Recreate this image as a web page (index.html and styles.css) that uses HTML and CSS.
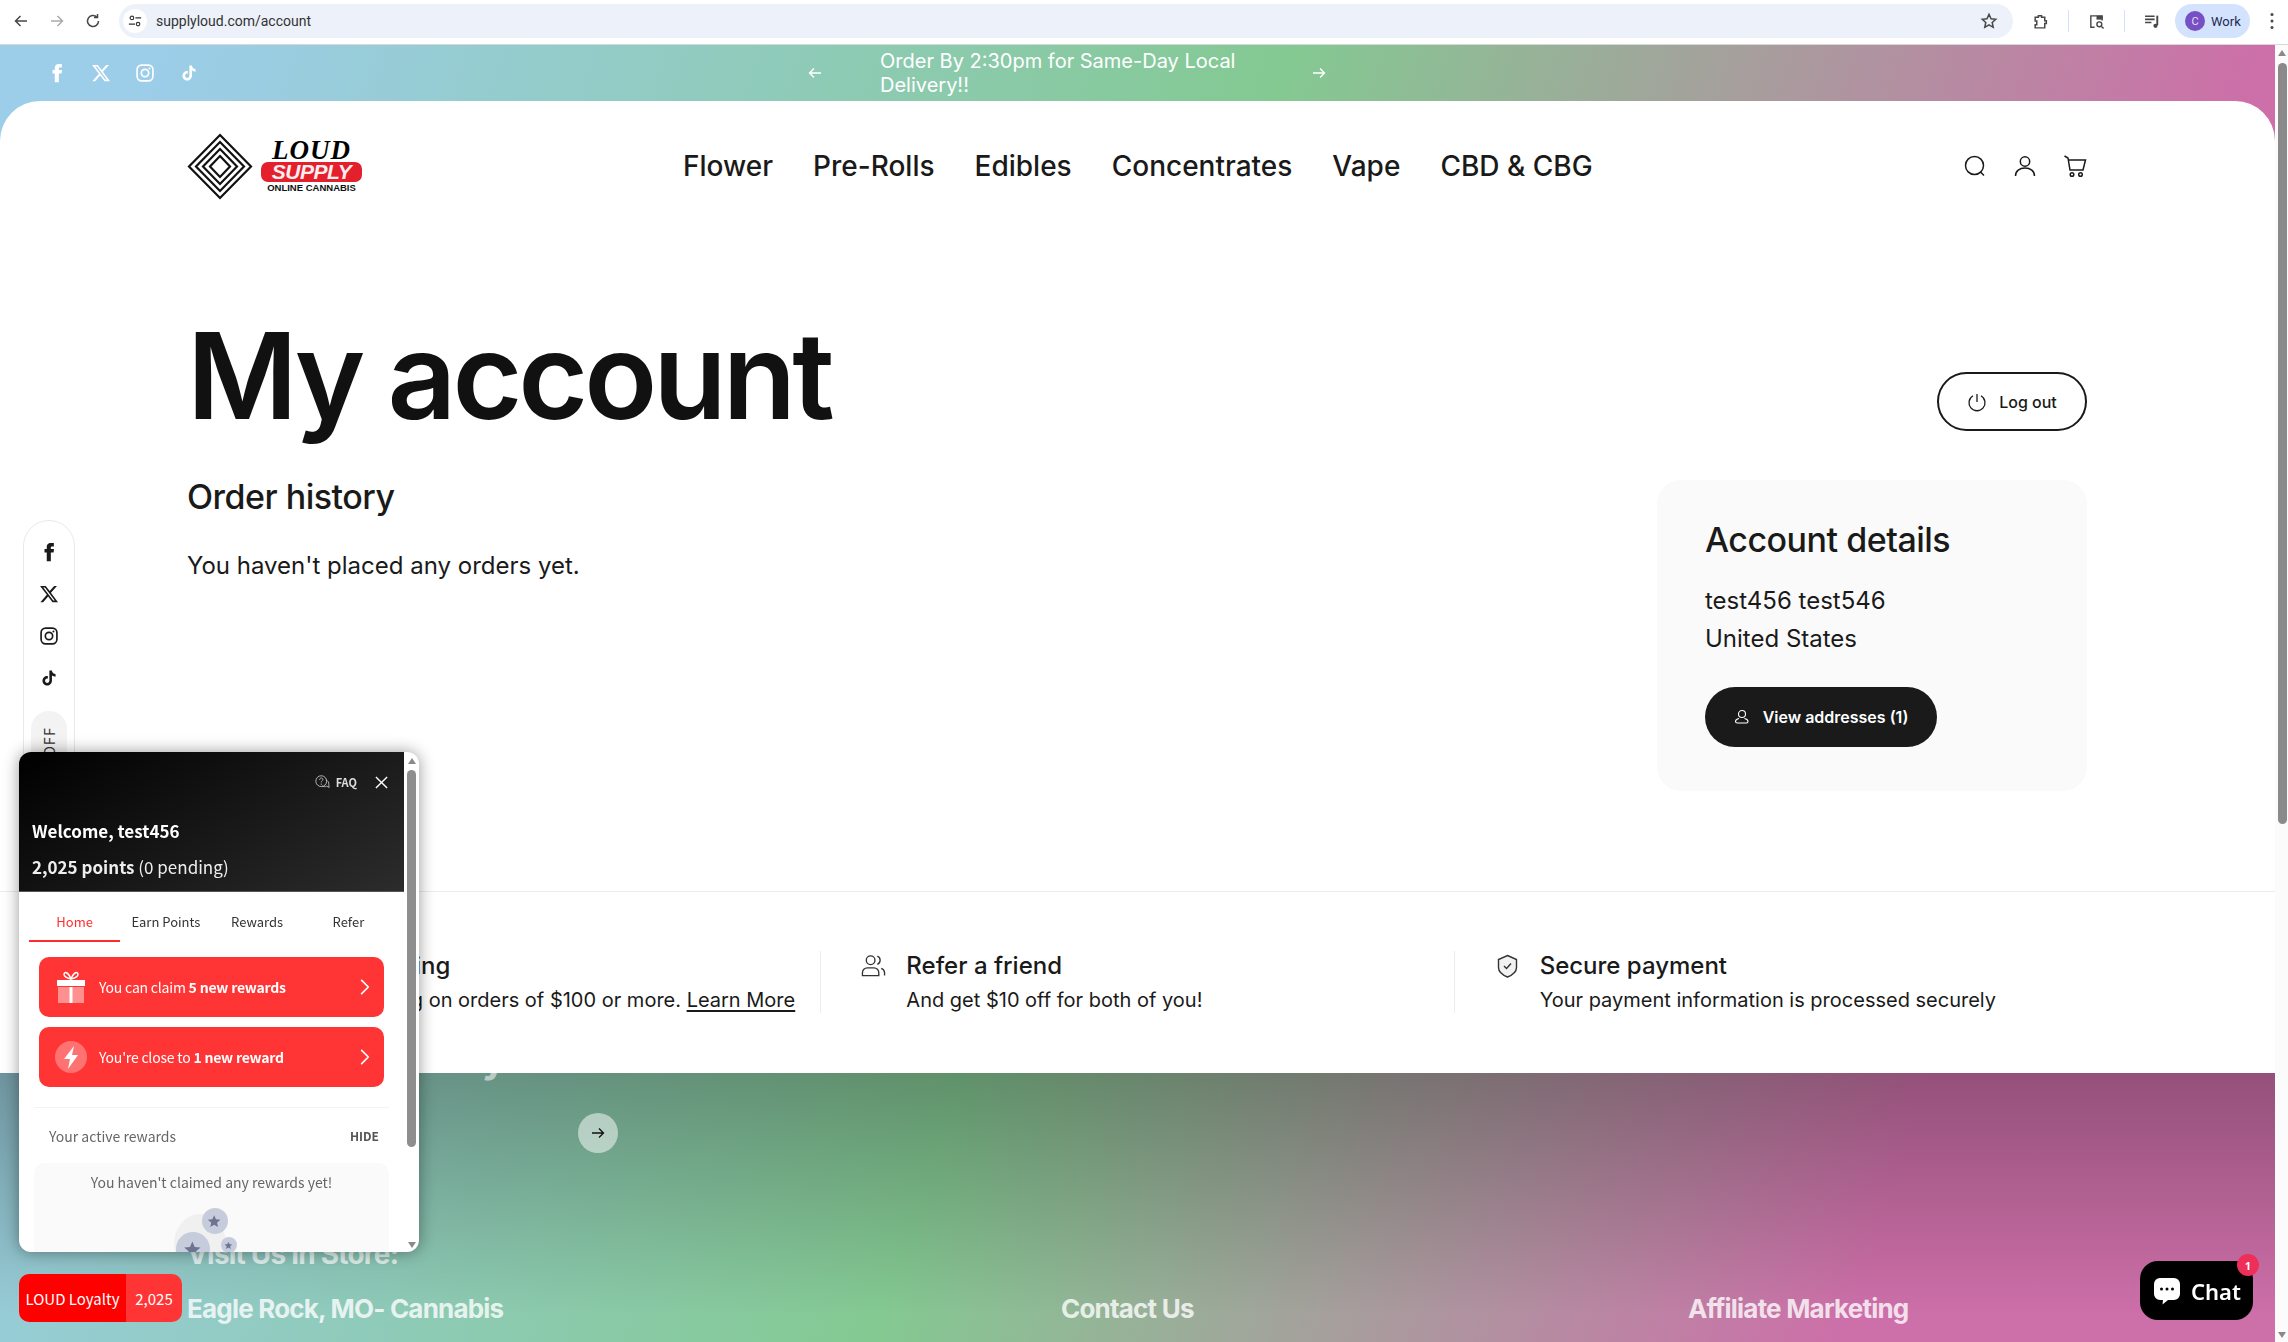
FILE: index.html
```html
<!DOCTYPE html>
<html lang="en">
<head>
    <meta charset="UTF-8">
    <meta name="viewport" content="width=device-width, initial-scale=1.0">
    <title>My account - Loud Supply</title>
    <link rel="stylesheet" href="styles.css">
</head>
<body>
    <svg class="icon-defs" aria-hidden="true">
        <symbol id="i-facebook" viewBox="0 0 24 24"><path fill="currentColor" d="M14.2 8.3V6.4c0-.9.6-1.1 1-1.1h2.6V1.2h-3.6c-4 0-4.9 3-4.9 4.9v2.2H6.6v4.2h2.7V23h4.9V12.5h3.3l.5-4.2z"/></symbol>
        <symbol id="i-x" viewBox="0 0 24 24"><path fill="currentColor" d="M18.244 2.25h3.308l-7.227 8.26 8.502 11.24H16.17l-5.214-6.817L4.99 21.75H1.68l7.73-8.835L1.254 2.25H8.08l4.713 6.231zm-1.161 17.52h1.833L7.084 4.126H5.117z"/></symbol>
        <symbol id="i-instagram" viewBox="0 0 24 24"><rect x="2.5" y="2.5" width="19" height="19" rx="5.5" fill="none" stroke="currentColor" stroke-width="2"/><circle cx="12" cy="12" r="4.4" fill="none" stroke="currentColor" stroke-width="2"/><circle cx="17.4" cy="6.6" r="1.2" fill="currentColor"/></symbol>
        <symbol id="i-tiktok" viewBox="0 0 24 24"><path fill="currentColor" d="M16.6 5.82A4.28 4.28 0 0 1 15.54 3h-3.09v12.4a2.59 2.59 0 0 1-2.59 2.5c-1.42 0-2.6-1.16-2.6-2.6 0-1.72 1.66-3.01 3.37-2.48V9.66c-3.45-.46-6.47 2.22-6.47 5.64 0 3.33 2.76 5.7 5.69 5.7 3.14 0 5.69-2.55 5.69-5.7V9.01a7.35 7.35 0 0 0 4.3 1.38V7.3s-1.88.09-3.24-1.48z"/></symbol>
        <symbol id="i-chevron" viewBox="0 0 12 20"><path d="M2 2l8 8-8 8" fill="none" stroke="currentColor" stroke-width="2" stroke-linecap="round" stroke-linejoin="round"/></symbol>
        <symbol id="i-star" viewBox="0 0 24 24"><path fill="currentColor" d="M12 2l3 7 7.5.6-5.7 4.9 1.8 7.4L12 18l-6.6 3.9 1.8-7.4L1.500 9.600 9 9z"/></symbol>
    </svg>

    <div class="browser-bar">
        <div class="browser-nav">
            <svg viewBox="0 0 16 16"><path d="M14 8H2.500M7.500 3L2.500 8l5 5" fill="none" stroke="#474747" stroke-width="1.500"/></svg>
            <svg viewBox="0 0 16 16"><path d="M2 8h11.500M8.500 3l5 5-5 5" fill="none" stroke="#aaa" stroke-width="1.500"/></svg>
            <svg viewBox="0 0 16 16"><path d="M13.500 8A5.500 5.500 0 1 1 11.800 4M12.500 1v3.600H9" fill="none" stroke="#474747" stroke-width="1.500"/></svg>
        </div>
        <div class="address-bar">
            <span class="site-info">
                <svg viewBox="0 0 16 16"><g fill="none" stroke="#333" stroke-width="1.300"><circle cx="4.500" cy="4.500" r="2"/><path d="M8.500 4.500H15M1 11.500h7"/><circle cx="11.500" cy="11.500" r="2"/></g></svg>
            </span>
            <span class="address-text">supplyloud.com/account</span>
            <svg class="address-star" viewBox="0 0 24 24"><path d="M12 3l2.700 6 6.300.7-4.700 4.300 1.300 6.500L12 17.200l-5.600 3.300 1.300-6.500L3 9.700 9.300 9z" fill="none" stroke="#474747" stroke-width="2"/></svg>
        </div>
        <div class="browser-tools">
            <svg viewBox="0 0 16 16"><path d="M3 4h3V2.500h3V4h3v3.200h1.500v2.600H12V14H3v-3h1.500V7.500H3z" fill="none" stroke="#474747" stroke-width="1.400"/></svg>
            <span class="tool-sep"></span>
            <svg viewBox="0 0 18 18"><path d="M7 15H3V3h12v5" fill="none" stroke="#474747" stroke-width="1.500"/><path d="M9 3h6v4H9z" fill="#474747"/><circle cx="12" cy="12" r="2.600" fill="none" stroke="#474747" stroke-width="1.500"/><path d="M14 14l2.500 2.500" stroke="#474747" stroke-width="1.500"/></svg>
            <span class="tool-sep"></span>
            <svg viewBox="0 0 16 16"><path d="M1 3h9M1 6h9M1 9h6" stroke="#474747" stroke-width="1.500"/><path d="M12.500 2.500v9" stroke="#474747" stroke-width="1.800"/><circle cx="10.800" cy="12" r="2" fill="#474747"/></svg>
            <div class="profile-pill"><span class="profile-avatar">C</span>Work</div>
            <svg class="kebab" viewBox="0 0 4 18"><circle cx="2" cy="2.500" r="1.500" fill="#474747"/><circle cx="2" cy="9" r="1.500" fill="#474747"/><circle cx="2" cy="15.500" r="1.500" fill="#474747"/></svg>
        </div>
    </div>

    <div class="viewport">
        <div class="page">
            <div class="announcement">
                <div class="announcement-social">
                    <svg><use href="#i-facebook"/></svg>
                    <svg><use href="#i-x"/></svg>
                    <svg><use href="#i-instagram"/></svg>
                    <svg><use href="#i-tiktok"/></svg>
                </div>
                <div class="announcement-slider">
                    <svg viewBox="0 0 16 16"><path d="M14 8H2.500M7 3.500L2.500 8 7 12.500" fill="none" stroke="#fff" stroke-width="1.300"/></svg>
                    <p>Order By 2:30pm for Same-Day Local Delivery!!</p>
                    <svg viewBox="0 0 16 16"><path d="M2 8h11.500M9 3.500L13.500 8 9 12.500" fill="none" stroke="#fff" stroke-width="1.300"/></svg>
                </div>
            </div>

            <main class="main-panel">
                <header class="site-header">
                    <a class="logo" href="#">
                        <svg class="logo-mark" viewBox="0 0 66 67">
                            <g fill="none" stroke="#111" stroke-width="2.200">
                                <polygon points="33,2 64,33.500 33,65 2,33.500"/>
                                <polygon points="33,9 57,33.500 33,58 9,33.500"/>
                                <polygon points="33,16 50,33.500 33,51 16,33.500"/>
                                <polygon points="33,23 43,33.500 33,44 23,33.500"/>
                            </g>
                        </svg>
                        <span class="logo-words">
                            <span class="logo-loud">LOUD</span>
                            <span class="logo-supply">SUPPLY</span>
                            <span class="logo-online">ONLINE CANNABIS</span>
                        </span>
                    </a>
                    <nav class="main-nav">
                        <a href="#">Flower</a>
                        <a href="#">Pre-Rolls</a>
                        <a href="#">Edibles</a>
                        <a href="#">Concentrates</a>
                        <a href="#">Vape</a>
                        <a href="#">CBD &amp; CBG</a>
                    </nav>
                    <div class="header-icons">
                        <svg viewBox="0 0 24 24"><circle cx="11.500" cy="11.500" r="9" fill="none" stroke="#1a1a1a" stroke-width="1.500"/><path d="M17.500 18l3.500 3.500" stroke="#1a1a1a" stroke-width="1.500"/></svg>
                        <svg viewBox="0 0 24 24"><circle cx="12" cy="7.500" r="4.700" fill="none" stroke="#1a1a1a" stroke-width="1.500"/><path d="M2.500 22c0-5 4-8 9.500-8s9.500 3 9.500 8" fill="none" stroke="#1a1a1a" stroke-width="1.500"/></svg>
                        <svg viewBox="0 0 24 24"><path d="M1.500 2L5 4l2 12h13l2.500-10H5.500" fill="none" stroke="#1a1a1a" stroke-width="1.500"/><circle cx="9" cy="20.500" r="1.800" fill="none" stroke="#1a1a1a" stroke-width="1.500"/><circle cx="17.500" cy="20.500" r="1.800" fill="none" stroke="#1a1a1a" stroke-width="1.500"/></svg>
                    </div>
                </header>

                <section class="account">
                    <div class="account-top">
                        <h1>My account</h1>
                        <a class="logout-btn" href="#">
                            <svg viewBox="0 0 20 20"><path d="M10 2v8M6 3.800a8 8 0 1 0 8 0" fill="none" stroke="#1a1a1a" stroke-width="1.300"/></svg>
                            Log out
                        </a>
                    </div>
                    <div class="account-body">
                        <div class="orders">
                            <h2>Order history</h2>
                            <p>You haven't placed any orders yet.</p>
                        </div>
                        <aside class="details-card">
                            <h2>Account details</h2>
                            <p>test456 test546<br>United States</p>
                            <a class="addresses-btn" href="#">
                                <svg viewBox="0 0 16 16"><g fill="none" stroke="#fff" stroke-width="1.100"><circle cx="8" cy="5" r="3.500"/><path d="M5 9.500c-2 .5-3.500 1.500-3.500 3 0 1 1 1.500 2 1.500h9c1 0 1.500-.7 1.500-1.500 0-1.500-1.500-2.500-3.500-3"/></g></svg>
                                View addresses (1)
                            </a>
                        </aside>
                    </div>
                </section>

                <section class="features">
                    <div class="feature feature-first">
                        <div>
                            <h3>Free shipping</h3>
                            <p>Free shipping on orders of $100 or more. <a href="#">Learn More</a></p>
                        </div>
                    </div>
                    <div class="feature">
                        <svg viewBox="0 0 26 24"><g fill="none" stroke="#333" stroke-width="1.400"><circle cx="10" cy="6" r="4.500"/><path d="M17 1.800a4.500 4.500 0 0 1 0 8.400"/><path d="M1.500 22v-3a5 5 0 0 1 5-5h7a5 5 0 0 1 5 5v3z"/><path d="M21 14.500a5 5 0 0 1 3.500 4.500v3"/></g></svg>
                        <div>
                            <h3>Refer a friend</h3>
                            <p>And get $10 off for both of you!</p>
                        </div>
                    </div>
                    <div class="feature">
                        <svg viewBox="0 0 22 24"><path d="M11 1.500l9 4v8c0 4-4 7.500-9 9.500-5-2-9-5.500-9-9.500v-8z" fill="#f2f2f2" stroke="#333" stroke-width="1.400"/><path d="M7.500 12l2.500 2.500 4.500-5" fill="none" stroke="#333" stroke-width="1.400"/></svg>
                        <div>
                            <h3>Secure payment</h3>
                            <p>Your payment information is processed securely</p>
                        </div>
                    </div>
                </section>
            </main>

            <footer class="site-footer">
                <div class="footer-top">
                    <span class="footer-clipped" aria-hidden="true">y</span>
                    <span class="footer-arrow">
                        <svg viewBox="0 0 16 16"><path d="M2 8h11.500M9 3.500L13.500 8 9 12.500" fill="none" stroke="#111" stroke-width="1.300"/></svg>
                    </span>
                </div>
                <div class="footer-cols">
                    <div>
                        <h4 class="visit-title">Visit Us In Store:</h4>
                        <h4>Eagle Rock, MO- Cannabis</h4>
                    </div>
                    <h4>Contact Us</h4>
                    <h4>Affiliate Marketing</h4>
                </div>
            </footer>
        </div>

        <div class="page-scrollbar">
            <span class="arrow-up"></span>
            <span class="page-thumb"></span>
            <span class="arrow-down"></span>
        </div>
    </div>

    <!-- things floating over the page -->
    <div class="side-social">
        <svg class="side-fb"><use href="#i-facebook"/></svg>
        <svg><use href="#i-x"/></svg>
        <svg><use href="#i-instagram"/></svg>
        <svg><use href="#i-tiktok"/></svg>
        <span class="side-off"><span>10% OFF</span></span>
    </div>

    <div class="loyalty-panel">
        <div class="loyalty-content">
            <div class="loyalty-head">
                <div class="loyalty-head-tools">
                    <svg class="faq-icon" viewBox="0 0 18 16"><g fill="none" stroke="#ccc" stroke-width="1"><circle cx="7.500" cy="7" r="6.500"/><path d="M13 5.500c2.500 1 4 3 3.500 5.500l.5 3.500-3-1.500c-2 1-4 .8-5.500-.5"/><path d="M5.500 5.500c0-3 4-3 4-.5 0 1.500-2 1.500-2 3.500"/></g><circle cx="7.500" cy="10.500" r=".8" fill="#ccc"/></svg>
                    <span class="faq-label">FAQ</span>
                    <svg class="close-icon" viewBox="0 0 14 14"><path d="M1 1l12 12M13 1L1 13" stroke="#fff" stroke-width="1.500"/></svg>
                </div>
                <p class="welcome">Welcome, test456</p>
                <p class="points"><b>2,025 points</b> (0 pending)</p>
            </div>
            <div class="loyalty-tabs">
                <span class="tab tab-active">Home</span>
                <span class="tab">Earn Points</span>
                <span class="tab">Rewards</span>
                <span class="tab">Refer</span>
            </div>
            <div class="reward-cards">
                <div class="reward-card">
                    <svg class="reward-icon" viewBox="0 0 30 32"><path d="M1 15V9h28v6z" fill="#fff"/><path d="M2 16h12v16H2zM16 16h12v16H16z" fill="#fff" opacity=".45"/><path d="M13.500 16h3v16h-3z" fill="#fff"/><path d="M15 8c-4-1-7-2-7-4.500 0-3 4-3 7 4.500 3-7.500 7-7.500 7-4.500C22 6 19 7 15 8z" fill="none" stroke="#fff" stroke-width="1.500"/></svg>
                    <p>You can claim <b>5 new rewards</b></p>
                    <svg class="reward-chevron"><use href="#i-chevron"/></svg>
                </div>
                <div class="reward-card">
                    <svg class="reward-icon" viewBox="0 0 32 32"><circle cx="16" cy="16" r="16" fill="#fff" opacity=".3"/><path d="M19 5L9 18h6l-2 10 10-14h-6z" fill="#fff"/></svg>
                    <p>You're close to <b>1 new reward</b></p>
                    <svg class="reward-chevron"><use href="#i-chevron"/></svg>
                </div>
            </div>
            <div class="active-rewards">
                <div class="active-head">
                    <span>Your active rewards</span>
                    <span class="hide-link">HIDE</span>
                </div>
                <div class="empty-box">
                    <p>You haven't claimed any rewards yet!</p>
                    <div class="empty-art">
                        <span class="art-blob"></span>
                        <span class="art-coin art-coin-top"><svg><use href="#i-star"/></svg></span>
                        <span class="art-coin art-coin-big"><svg><use href="#i-star"/></svg></span>
                        <span class="art-coin art-coin-small"><svg><use href="#i-star"/></svg></span>
                    </div>
                </div>
            </div>
        </div>
        <div class="loyalty-scrollbar">
            <span class="arrow-up"></span>
            <span class="loyalty-thumb"></span>
            <span class="arrow-down"></span>
        </div>
    </div>

    <div class="loyalty-launcher">
        <span class="launcher-name">LOUD Loyalty</span>
        <span class="launcher-points">2,025</span>
    </div>

    <div class="chat-btn">
        <svg viewBox="0 0 28 28"><path d="M7 1h14a6 6 0 0 1 6 6v10a6 6 0 0 1-6 6h-6l-5.500 4.500 .5-4.500H7a6 6 0 0 1-6-6V7a6 6 0 0 1 6-6z" fill="#fff"/><circle cx="8.500" cy="12" r="1.500"/><circle cx="14" cy="12" r="1.500"/><circle cx="19.500" cy="12" r="1.500"/></svg>
        Chat
        <span class="chat-badge">1</span>
    </div>
</body>
</html>
```

FILE: styles.css
```css
* {
    box-sizing: border-box;
}

html, body {
    height: 100%;
}

body {
    margin: 0;
    height: 1342px;
    overflow: hidden;
    display: flex;
    flex-direction: column;
    background-color: #fff;
    color: #1a1a1a;
    font-family: Inter, "Liberation Sans", sans-serif;
}

h1, h2, h3, h4, p {
    margin: 0;
}

a {
    color: inherit;
    text-decoration: none;
}

.icon-defs {
    display: none;
}

/* browser toolbar */
.browser-bar {
    height: 45px;
    flex: none;
    display: flex;
    align-items: center;
    border-bottom: 1px solid #d8d8d8;
    background-color: #fff;
    font-family: Roboto, sans-serif;
    padding-bottom: 2px;
}

.browser-nav {
    width: 119px;
    padding-left: 13px;
    display: flex;
    gap: 20px;
}

.browser-nav svg {
    width: 16px;
    height: 16px;
}

.address-bar {
    width: 1894px;
    height: 34px;
    border-radius: 17px;
    background-color: #ecf1fa;
    display: flex;
    align-items: center;
    padding: 0 15px 0 4px;
}

.site-info {
    width: 24px;
    height: 24px;
    border-radius: 50%;
    background-color: #fff;
    display: flex;
    align-items: center;
    justify-content: center;
}

.site-info svg {
    width: 14px;
    height: 14px;
}

.address-text {
    margin-left: 9px;
    font-size: 14px;
    color: #333;
    flex: 1;
}

.address-star {
    width: 18px;
    height: 18px;
}

.browser-tools {
    flex: 1;
    display: flex;
    align-items: center;
    padding-left: 19px;
}

.browser-tools svg {
    width: 17px;
    height: 17px;
}

.tool-sep {
    width: 1px;
    height: 22px;
    background-color: #d3e3fd;
    margin: 0 19px;
}

.profile-pill {
    width: 75px;
    height: 34px;
    margin-left: 14px;
    border-radius: 17px;
    background-color: #d3e3fd;
    display: flex;
    align-items: center;
    gap: 6px;
    padding-left: 10px;
    font-size: 13px;
    color: #1c2a50;
}

.profile-avatar {
    width: 20px;
    height: 20px;
    border-radius: 50%;
    background-color: #7750c4;
    color: #e6ddff;
    font-size: 11px;
    display: flex;
    align-items: center;
    justify-content: center;
}

.browser-tools .kebab {
    width: 4px;
    height: 18px;
    margin-left: 20px;
}

/* page */
.viewport {
    flex: 1;
    min-height: 0;
    display: flex;
}

.page {
    flex: 1;
    display: flex;
    flex-direction: column;
    background: linear-gradient(108deg, #9ccde9 6%, #84c992 48%, #cd6fa9 84%);
}

.page-scrollbar {
    width: 13px;
    background-color: #fbfbfb;
    display: flex;
    flex-direction: column;
    align-items: center;
    padding: 5px 0 4px 1px;
}

.arrow-up {
    width: 0;
    height: 0;
    flex: none;
    border-left: 4px solid transparent;
    border-right: 4px solid transparent;
    border-bottom: 6px solid #8a8a8a;
}

.arrow-down {
    width: 0;
    height: 0;
    flex: none;
    margin-top: auto;
    border-left: 4px solid transparent;
    border-right: 4px solid transparent;
    border-top: 6px solid #8a8a8a;
}

.page-thumb {
    width: 9px;
    height: 761px;
    margin-top: 7px;
    border-radius: 5px;
    background-color: #8a8a8a;
}

.announcement {
    height: 56px;
    flex: none;
    display: flex;
    align-items: center;
    position: relative;
    color: #fff;
}

.announcement-social {
    padding-left: 47px;
    display: flex;
    gap: 24px;
}

.announcement-social svg {
    width: 20px;
    height: 20px;
}

.announcement-slider {
    width: 520px;
    margin-left: 608px;
    display: flex;
    align-items: center;
    justify-content: space-between;
}

.announcement-slider svg {
    width: 16px;
    height: 16px;
    flex: none;
}

.announcement-slider p {
    width: 370px;
    font-size: 20px;
    line-height: 24px;
    margin-left: -4px;
}

.main-panel {
    height: 972px;
    flex: none;
    background-color: #fff;
    border-radius: 40px 40px 0 0;
    display: flex;
    flex-direction: column;
}

.site-header {
    height: 130px;
    flex: none;
    padding: 0 188px 0 187px;
    display: flex;
    align-items: center;
}

.logo {
    width: 496px;
    display: flex;
    align-items: center;
    gap: 8px;
}

.logo-mark {
    width: 66px;
    height: 67px;
}

.logo-words {
    width: 101px;
    display: flex;
    flex-direction: column;
    align-items: center;
}

.logo-loud {
    font-family: "Liberation Serif", serif;
    font-style: italic;
    font-weight: 700;
    font-size: 27px;
    line-height: 23px;
    letter-spacing: 1px;
    color: #000;
}

.logo-supply {
    width: 100%;
    height: 20px;
    border-radius: 7px;
    background-color: #e4202c;
    color: #fdeef0;
    font-family: "Liberation Sans", sans-serif;
    font-weight: 700;
    font-size: 21px;
    line-height: 20px;
    text-align: center;
    letter-spacing: -.5px;
    font-style: italic;
}

.logo-online {
    font-family: "Liberation Sans", sans-serif;
    font-weight: 700;
    font-size: 9.500px;
    line-height: 11px;
    white-space: nowrap;
    color: #111;
}

.main-nav {
    display: flex;
    gap: 40px;
    font-size: 28px;
    font-weight: 500;
    color: #1a1a1a;
}

.header-icons {
    margin-left: auto;
    display: flex;
    gap: 26px;
}

.header-icons svg {
    width: 24px;
    height: 24px;
}

.account {
    flex: 1;
    padding: 0 188px 0 187px;
    display: flex;
    flex-direction: column;
}

.account-top {
    height: 249px;
    flex: none;
    display: flex;
    justify-content: space-between;
    align-items: flex-end;
    padding-bottom: 49px;
}

h1 {
    font-size: 120px;
    font-weight: 600;
    line-height: 120px;
    letter-spacing: -4px;
    color: #111;
    margin-bottom: -5px;
}

.logout-btn {
    width: 150px;
    height: 59px;
    border: 2px solid #1a1a1a;
    border-radius: 30px;
    display: flex;
    align-items: center;
    justify-content: center;
    gap: 12px;
    font-size: 16px;
    font-weight: 500;
}

.logout-btn svg {
    width: 20px;
    height: 20px;
}

.account-body {
    display: flex;
    justify-content: space-between;
    align-items: flex-start;
}

.orders h2 {
    font-size: 34px;
    font-weight: 500;
    line-height: 34px;
    letter-spacing: -.5px;
}

.orders p {
    margin-top: 37px;
    font-size: 24px;
    line-height: 30px;
}

.details-card {
    width: 430px;
    height: 311px;
    padding: 40px 48px;
    border-radius: 24px;
    background-color: #fafafa;
}

.details-card h2 {
    font-size: 34px;
    font-weight: 500;
    line-height: 40px;
    letter-spacing: -.5px;
}

.details-card p {
    margin-top: 22px;
    font-size: 24px;
    line-height: 38px;
}

.addresses-btn {
    width: 232px;
    height: 60px;
    margin-top: 29px;
    border-radius: 30px;
    background-color: #1a1a1a;
    color: #fff;
    display: flex;
    align-items: center;
    justify-content: center;
    gap: 13px;
    font-size: 16px;
    font-weight: 600;
}

.addresses-btn svg {
    width: 16px;
    height: 16px;
}

.features {
    height: 182px;
    flex: none;
    border-top: 1px solid #ececec;
    padding: 59px 188px 0 187px;
    display: grid;
    grid-template-columns: repeat(3, 1fr);
}

.feature {
    height: 62px;
    padding-left: 40px;
    display: flex;
    gap: 20px;
    border-left: 1px solid #ececec;
}

.feature-first {
    padding-left: 108px;
    border-left: none;
}

.feature svg {
    width: 25px;
    height: 24px;
    flex: none;
    margin-top: 3px;
}

.feature h3 {
    font-size: 24px;
    font-weight: 500;
    line-height: 30px;
}

.feature p {
    margin-top: 6px;
    font-size: 20px;
    line-height: 26px;
    white-space: nowrap;
}

.feature p a {
    text-decoration: underline;
    text-underline-offset: 3px;
}

.site-footer {
    flex: 1;
    min-height: 0;
    overflow: hidden;
    padding: 0 188px 0 187px;
    background: linear-gradient(to bottom, rgba(0, 0, 0, .28), rgba(0, 0, 0, 0) 90%);
    color: rgba(255, 255, 255, .8);
}

.footer-top {
    height: 165px;
    display: flex;
    justify-content: space-between;
    width: 431px;
}

.footer-clipped {
    font-size: 40px;
    font-weight: 700;
    line-height: 40px;
    margin: -35px 0 0 295px;
    color: rgba(255, 255, 255, .55);
}

.footer-arrow {
    width: 40px;
    height: 40px;
    margin-top: 40px;
    border-radius: 50%;
    background-color: rgba(255, 255, 255, .5);
    display: flex;
    align-items: center;
    justify-content: center;
}

.footer-arrow svg {
    width: 16px;
    height: 16px;
}

.footer-cols {
    display: grid;
    grid-template-columns: 874px 627px 1fr;
    align-items: end;
}

.site-footer h4 {
    font-size: 26px;
    font-weight: 700;
    line-height: 32px;
    letter-spacing: -.8px;
    white-space: nowrap;
}

.site-footer .visit-title {
    font-size: 28px;
    margin-bottom: 23px;
    color: rgba(255, 255, 255, .7);
}

/* sticky social rail */
.side-social {
    position: fixed;
    left: 23px;
    top: 520px;
    width: 52px;
    height: 300px;
    border: 1px solid #e8e8e8;
    border-radius: 26px;
    padding-top: 21px;
    display: flex;
    flex-direction: column;
    align-items: center;
    gap: 22px;
    background-color: #fff;
    color: #1a1a1a;
}

.side-social svg {
    width: 20px;
    height: 20px;
    flex: none;
}

.side-off {
    width: 36px;
    height: 120px;
    margin-top: 1px;
    border-radius: 18px;
    background-color: #f3f3f3;
    display: flex;
    justify-content: center;
    padding-top: 16px;
}

.side-off span {
    writing-mode: vertical-rl;
    transform: rotate(180deg);
    font-size: 14px;
    letter-spacing: 1px;
    height: 66px;
    white-space: nowrap;
    color: #333;
}

/* loyalty widget */
.loyalty-panel {
    position: fixed;
    left: 19px;
    top: 752px;
    width: 400px;
    height: 500px;
    border-radius: 12px;
    overflow: hidden;
    background-color: #fff;
    box-shadow: 0 0 16px rgba(0, 0, 0, .4);
    display: flex;
    font-family: "Noto Sans CJK SC", "Noto Sans", sans-serif;
}

.loyalty-content {
    width: 385px;
    flex: none;
    overflow: hidden;
}

.loyalty-scrollbar {
    flex: 1;
    display: flex;
    flex-direction: column;
    align-items: center;
    padding: 6px 0 4px;
}

.loyalty-thumb {
    width: 9px;
    height: 377px;
    margin-top: 6px;
    border-radius: 5px;
    background-color: #8e8e8e;
}

.loyalty-head {
    height: 140px;
    padding: 23px 13px 0;
    background: linear-gradient(150deg, #000, #2c2c2c);
    border-bottom: 1px solid #555;
    color: #fff;
}

.loyalty-head-tools {
    display: flex;
    align-items: center;
    justify-content: flex-end;
    height: 14px;
    padding-right: 3px;
}

.faq-icon {
    width: 15px;
    height: 14px;
}

.faq-label {
    margin-left: 6px;
    font-size: 11px;
    font-weight: 700;
    color: #ddd;
}

.close-icon {
    width: 13px;
    height: 13px;
    margin-left: 18px;
}

.welcome {
    margin-top: 30px;
    font-size: 17px;
    font-weight: 700;
    line-height: 24px;
}

.points {
    margin-top: 12px;
    font-size: 17px;
    line-height: 24px;
    color: #eee;
}

.loyalty-tabs {
    height: 50px;
    padding: 0 10px;
    display: grid;
    grid-template-columns: repeat(4, 1fr);
    text-align: center;
}

.tab {
    font-size: 13px;
    line-height: 18px;
    padding-top: 21px;
    color: #333;
}

.tab-active {
    color: #ff2c2c;
    border-bottom: 2px solid #ff2c2c;
}

.reward-cards {
    padding: 15px 20px 20px;
    display: flex;
    flex-direction: column;
    gap: 10px;
}

.reward-card {
    height: 60px;
    border-radius: 10px;
    background-color: #ff3535;
    color: #fff;
    display: flex;
    align-items: center;
    padding: 0 14px 0 16px;
}

.reward-icon {
    width: 32px;
    height: 32px;
    flex: none;
}

.reward-card p {
    margin-left: 12px;
    flex: 1;
    font-size: 14px;
    letter-spacing: -.2px;
}

.reward-chevron {
    width: 10px;
    height: 18px;
}

.active-rewards {
    margin: 0 15px;
    border-top: 1px solid #f3f3f3;
}

.active-head {
    height: 55px;
    padding: 0 10px 0 15px;
    display: flex;
    align-items: center;
    justify-content: space-between;
    font-size: 14px;
    color: #666;
}

.hide-link {
    font-size: 12px;
    font-weight: 700;
    color: #555;
}

.empty-box {
    height: 200px;
    border-radius: 10px;
    background-color: #fafafa;
    padding-top: 9px;
    text-align: center;
    font-size: 14px;
    line-height: 20px;
    color: #666;
}

.empty-art {
    position: relative;
    width: 80px;
    height: 70px;
    margin: 16px auto 0;
    color: #6d7390;
}

.art-blob {
    position: absolute;
    left: 2px;
    top: 6px;
    width: 52px;
    height: 60px;
    border-radius: 50%;
    background-color: #f0f0f0;
}

.art-coin {
    position: absolute;
    border-radius: 50%;
    background-color: #c6ccdc;
    display: flex;
    align-items: center;
    justify-content: center;
}

.art-coin svg {
    width: 55%;
    height: 55%;
}

.art-coin-top {
    left: 30px;
    top: 0;
    width: 26px;
    height: 26px;
}

.art-coin-big {
    left: 4px;
    top: 24px;
    width: 34px;
    height: 34px;
}

.art-coin-small {
    left: 49px;
    top: 29px;
    width: 16px;
    height: 16px;
}

.loyalty-launcher {
    position: fixed;
    left: 19px;
    top: 1274px;
    width: 163px;
    height: 48px;
    border-radius: 10px;
    overflow: hidden;
    display: flex;
    color: #fff;
    font-family: "Noto Sans CJK SC", "Noto Sans", sans-serif;
    font-size: 15px;
}

.launcher-name {
    width: 107px;
    background-color: #f00;
    display: flex;
    align-items: center;
    justify-content: center;
}

.launcher-points {
    flex: 1;
    background-color: #ff3535;
    display: flex;
    align-items: center;
    justify-content: center;
}

/* chat button */
.chat-btn {
    position: fixed;
    left: 2140px;
    top: 1261px;
    width: 113px;
    height: 59px;
    border-radius: 18px;
    background-color: #000;
    color: #fff;
    display: flex;
    align-items: center;
    gap: 10px;
    padding-left: 13px;
    font-size: 22px;
    font-weight: 600;
    font-family: "Noto Sans", sans-serif;
}

.chat-btn svg {
    width: 28px;
    height: 28px;
    flex: none;
}

.chat-badge {
    position: absolute;
    right: -6px;
    top: -7px;
    width: 22px;
    height: 22px;
    border-radius: 50%;
    background-color: #ee2f5a;
    display: flex;
    align-items: center;
    justify-content: center;
    font-size: 11px;
    font-weight: 700;
}
```
